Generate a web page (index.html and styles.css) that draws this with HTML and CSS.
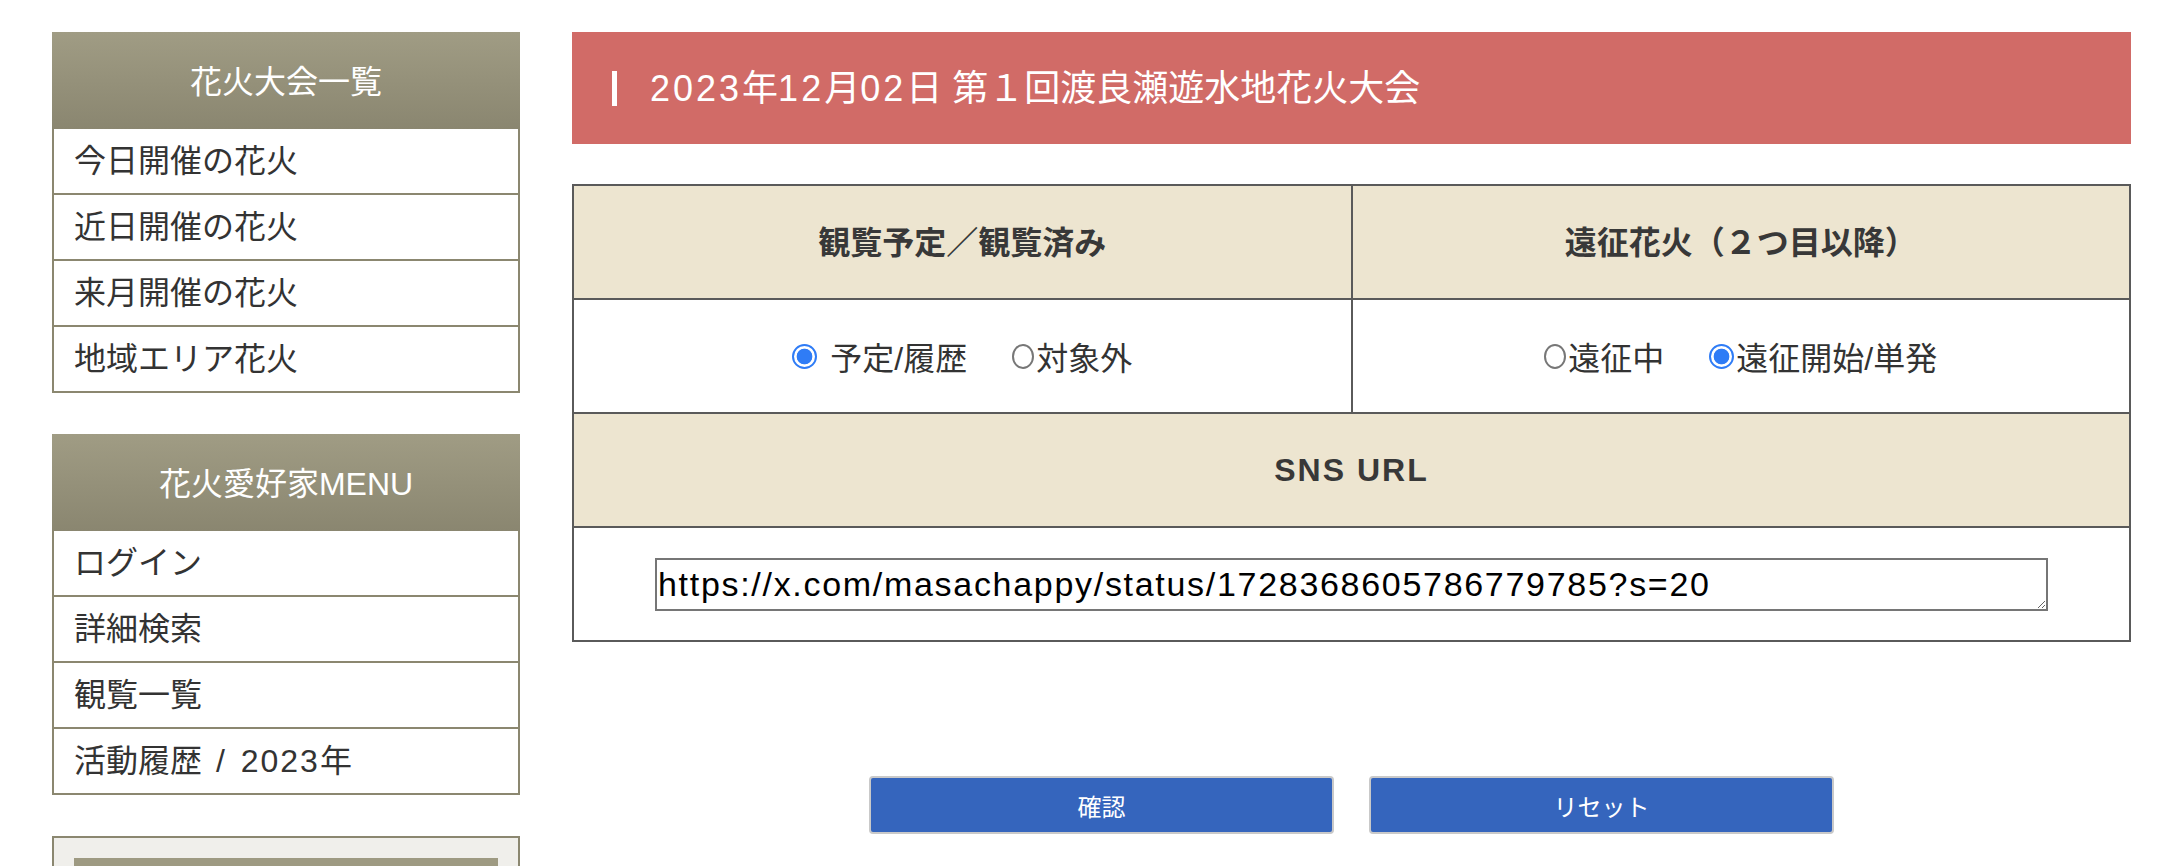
FILE: index.html
```html
<!DOCTYPE html>
<html lang="ja">
<head>
<meta charset="utf-8">
<title>花火大会</title>
<link rel="stylesheet" href="styles.css">
</head>
<body>
<div class="page">
  <aside class="sidebar">
    <section class="side-box">
      <h2 class="side-head">花火大会一覧</h2>
      <ul class="side-list">
        <li>今日開催の花火</li>
        <li>近日開催の花火</li>
        <li>来月開催の花火</li>
        <li>地域エリア花火</li>
      </ul>
    </section>
    <section class="side-box">
      <h2 class="side-head">花火愛好家MENU</h2>
      <ul class="side-list">
        <li>ログイン</li>
        <li>詳細検索</li>
        <li>観覧一覧</li>
        <li>活動履歴<span class="latin"> / 2023</span>年</li>
      </ul>
    </section>
    <section class="side-box side-box--plain">
      <div class="side-bar"></div>
    </section>
  </aside>
  <main class="main">
    <h1 class="title"><span class="title-mark"></span><span class="title-text"><span class="num">2023</span>年<span class="num">12</span>月<span class="num">02</span>日 第１回渡良瀬遊水地花火大会</span></h1>
    <form class="form-grid">
      <div class="cell head jp">観覧予定／観覧済み</div>
      <div class="cell head jp">遠征花火（２つ目以降）</div>
      <div class="cell opts">
        <label class="opt"><input type="radio" name="watch" checked><span class="opt-text spaced">予定/履歴</span></label>
        <label class="opt"><input type="radio" name="watch"><span class="opt-text">対象外</span></label>
      </div>
      <div class="cell opts">
        <label class="opt"><input type="radio" name="trip"><span class="opt-text">遠征中</span></label>
        <label class="opt"><input type="radio" name="trip" checked><span class="opt-text">遠征開始/単発</span></label>
      </div>
      <div class="cell head wide sns">SNS URL</div>
      <div class="cell wide">
        <textarea class="url-box">https://x.com/masachappy/status/1728368605786779785?s=20</textarea>
      </div>
    </form>
    <div class="actions">
      <button class="btn" type="button">確認</button>
      <button class="btn" type="button">リセット</button>
    </div>
  </main>
</div>
</body>
</html>
```

FILE: styles.css
```css
html, body {
  margin: 0;
  padding: 0;
  background: #fff;
}

body {
  font-family: "Liberation Sans", "Noto Sans CJK JP", sans-serif;
  color: #333;
}

.page {
  display: flex;
  align-items: flex-start;
  gap: 52px;
  padding: 32px 0 0 52px;
}

/* ---------- sidebar ---------- */
.sidebar {
  width: 468px;
  flex: none;
}

.side-box {
  margin-bottom: 41px;
}

.side-head {
  box-sizing: border-box;
  margin: 0;
  height: 97px;
  padding-bottom: 4px;
  display: flex;
  align-items: center;
  justify-content: center;
  background: linear-gradient(#a09c84, #8a8670);
  color: #fff;
  font-size: 32px;
  font-weight: normal;
}

.side-list {
  list-style: none;
  margin: 0;
  padding: 0;
  border: 2px solid #8b8770;
  border-top: none;
}

.side-list li {
  height: 64px;
  line-height: 64px;
  padding-left: 20px;
  font-size: 32px;
  color: #333;
  border-bottom: 2px solid #8b8770;
}

.side-list li:last-child {
  border-bottom: none;
}

.latin {
  letter-spacing: 2px;
  word-spacing: 3px;
}

.side-box--plain {
  border: 2px solid #8b8770;
  background: #f0efeb;
  padding: 20px;
}

.side-bar {
  height: 60px;
  background: #9e9a82;
}

/* ---------- main ---------- */
.main {
  width: 1559px;
  flex: none;
}

.title {
  box-sizing: border-box;
  margin: 0;
  height: 112px;
  display: flex;
  align-items: center;
  padding: 0 0 0 40px;
  background: #d16b67;
  color: #fff;
  font-size: 36px;
  font-weight: normal;
}

.title-mark {
  width: 5px;
  height: 35px;
  background: #fff;
  margin-right: 33px;
  flex: none;
}

.title-text {
  padding-bottom: 6px;
}

.title-text .num {
  letter-spacing: 3px;
}

.form-grid {
  margin: 40px 0 0;
  display: grid;
  grid-template-columns: 1fr 1fr;
  grid-template-rows: repeat(4, 112px);
  gap: 2px;
  padding: 2px;
  background: #5a5a5a;
}

.cell {
  box-sizing: border-box;
  background: #fff;
  display: flex;
  align-items: center;
  justify-content: center;
  font-size: 32px;
  color: #333;
}

.head {
  background: #ede5d0;
  font-weight: bold;
  color: #383838;
}

.head.jp {
  padding-bottom: 4px;
}

.sns {
  letter-spacing: 2px;
}

.wide {
  grid-column: 1 / -1;
}

.opts {
  gap: 45px;
}

.opt {
  display: inline-flex;
  align-items: center;
}

.opt input[type="radio"] {
  -webkit-appearance: none;
  appearance: none;
  box-sizing: border-box;
  width: 22px;
  height: 25px;
  margin: 0 2px 0 0;
  border-radius: 50%;
  border: 2px solid #777;
  background: #fff;
  flex: none;
}

.opt input[type="radio"]:checked {
  width: 25px;
  height: 25px;
  border: 2.5px solid #2f7cf6;
  background: radial-gradient(circle, #2f7cf6 0 7.5px, #fff 8.2px);
}

.opt-text.spaced {
  margin-left: 11px;
}

.url-box {
  box-sizing: border-box;
  width: 1393px;
  height: 53px;
  margin: 0;
  padding: 4px 1px 0;
  border: 2px solid #767676;
  border-radius: 0;
  font-family: "Liberation Sans", "Noto Sans CJK JP", sans-serif;
  font-size: 34px;
  line-height: 40px;
  letter-spacing: 1.7px;
  color: #000;
  background: #fff;
  overflow: hidden;
}

.actions {
  display: flex;
  justify-content: center;
  gap: 35px;
  margin-top: 134px;
}

.btn {
  width: 465px;
  height: 58px;
  background: #3565bd;
  border: 2px solid #c9c9c9;
  border-radius: 4px;
  color: #fff;
  font-family: "Liberation Sans", "Noto Sans CJK JP", sans-serif;
  font-size: 24px;
  padding: 0;
}
```
